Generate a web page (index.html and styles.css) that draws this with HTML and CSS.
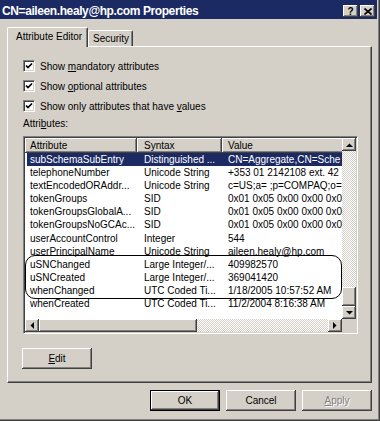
FILE: index.html
```html
<!DOCTYPE html>
<html lang="en">
<head>
    <meta charset="UTF-8">
    <title>CN=aileen.healy@hp.com Properties</title>
    <link rel="stylesheet" href="styles.css">
</head>
<body>
    <div class="window">
        <div class="titlebar">
            <span class="title">CN=aileen.healy@hp.com Properties</span>
            <div class="caption-btns">
                <span class="cap-btn">?</span>
                <span class="cap-btn">
                    <svg width="8" height="7" viewBox="0 0 8 7"><path d="M0.5 0.5L7.5 6.5M7.5 0.5L0.5 6.5" stroke="#000" stroke-width="1.6"/></svg>
                </span>
            </div>
        </div>
        <div class="content">
            <div class="tabs">
                <div class="tab active">Attribute Editor</div>
                <div class="tab">Security</div>
            </div>
            <div class="panel">
                <div class="check">
                    <span class="box"><svg width="8" height="8" viewBox="0 0 8 8"><polyline points="1,3.5 3,5.6 7,1.5" fill="none" stroke="#000" stroke-width="1.7"/></svg></span>
                    <span>Show <u>m</u>andatory attributes</span>
                </div>
                <div class="check">
                    <span class="box"><svg width="8" height="8" viewBox="0 0 8 8"><polyline points="1,3.5 3,5.6 7,1.5" fill="none" stroke="#000" stroke-width="1.7"/></svg></span>
                    <span>Show <u>o</u>ptional attributes</span>
                </div>
                <div class="check">
                    <span class="box"><svg width="8" height="8" viewBox="0 0 8 8"><polyline points="1,3.5 3,5.6 7,1.5" fill="none" stroke="#000" stroke-width="1.7"/></svg></span>
                    <span>Show only attributes that have <u>v</u>alues</span>
                </div>
                <div class="list-label">Attri<u>b</u>utes:</div>

                <div class="listview">
                    <div class="list-main">
                        <div class="list-head">
                            <span class="hcell">Attribute</span>
                            <span class="hcell syn">Syntax</span>
                            <span class="hcell val">Value</span>
                        </div>
                        <div class="row selected"><span>subSchemaSubEntry</span><span>Distinguished ...</span><span>CN=Aggregate,CN=Sche</span></div>
                        <div class="row"><span>telephoneNumber</span><span>Unicode String</span><span>+353 01 2142108 ext. 42</span></div>
                        <div class="row"><span>textEncodedORAddr...</span><span>Unicode String</span><span>c=US;a= ;p=COMPAQ;o=</span></div>
                        <div class="row"><span>tokenGroups</span><span>SID</span><span>0x01 0x05 0x00 0x00 0x0</span></div>
                        <div class="row"><span>tokenGroupsGlobalA...</span><span>SID</span><span>0x01 0x05 0x00 0x00 0x0</span></div>
                        <div class="row"><span>tokenGroupsNoGCAc...</span><span>SID</span><span>0x01 0x05 0x00 0x00 0x0</span></div>
                        <div class="row"><span>userAccountControl</span><span>Integer</span><span>544</span></div>
                        <div class="row"><span>userPrincipalName</span><span>Unicode String</span><span>aileen.healy@hp.com</span></div>
                        <div class="row"><span>uSNChanged</span><span>Large Integer/...</span><span>409982570</span></div>
                        <div class="row"><span>uSNCreated</span><span>Large Integer/...</span><span>369041420</span></div>
                        <div class="row"><span>whenChanged</span><span>UTC Coded Ti...</span><span>1/18/2005 10:57:52 AM</span></div>
                        <div class="row"><span>whenCreated</span><span>UTC Coded Ti...</span><span>11/2/2004 8:16:38 AM</span></div>
                        <div class="mark"></div>
                    </div>
                    <div class="vscroll">
                        <span class="arrow"><svg width="7" height="4" viewBox="0 0 7 4"><path d="M0 4H7L3.5 0.5Z"/></svg></span>
                        <div class="track track-v"><span class="thumb thumb-v"></span></div>
                        <span class="arrow"><svg width="7" height="4" viewBox="0 0 7 4"><path d="M0 0H7L3.5 3.5Z"/></svg></span>
                    </div>
                    <div class="hscroll">
                        <span class="arrow"><svg width="4" height="7" viewBox="0 0 4 7"><path d="M4 0V7L0.5 3.5Z"/></svg></span>
                        <div class="track"><span class="thumb thumb-h"></span></div>
                        <span class="arrow"><svg width="4" height="7" viewBox="0 0 4 7"><path d="M0 0V7L3.5 3.5Z"/></svg></span>
                    </div>
                    <div class="corner"></div>
                </div>

                <button class="btn edit-btn"><span><u>E</u>dit</span></button>
            </div>
            <div class="actions">
                <button class="btn default">OK</button>
                <button class="btn">Cancel</button>
                <button class="btn disabled"><span><u>A</u>pply</span></button>
            </div>
        </div>
    </div>
</body>
</html>
```

FILE: styles.css
```css
html,
body {
    margin: 0;
    background: #d4d0c8;
}

body {
    font-family: "Liberation Sans", Arial, sans-serif;
    font-size: 10px;
    color: #000;
}

.window {
    width: 380px;
    height: 421px;
    box-sizing: border-box;
    padding: 0 3px 2px 0;
    background: #d4d0c8;
    box-shadow: inset -1px -1px #404040, inset -2px -2px #808080;
}

/* title bar */
.titlebar {
    height: 19px;
    padding: 0 2px;
    background: #1c2a63;
    color: #fff;
    display: flex;
    justify-content: space-between;
    align-items: flex-start;
}

.title {
    font-weight: bold;
    font-size: 12px;
    letter-spacing: -0.4px;
    line-height: 15px;
    padding-top: 4px;
    white-space: nowrap;
}

.caption-btns {
    display: flex;
    gap: 2px;
    margin-top: 5px;
}

.cap-btn {
    width: 15px;
    height: 12px;
    background: #d4d0c8;
    color: #000;
    font-weight: bold;
    font-size: 10px;
    display: flex;
    align-items: center;
    justify-content: center;
    box-shadow: inset -1px -1px #404040, inset 1px 1px #fff, inset -2px -2px #808080;
}

.content {
    padding: 8px 0 0 7px;
}

/* tabs */
.tabs {
    display: flex;
    align-items: flex-end;
    height: 19px;
}

.tab {
    box-sizing: border-box;
    height: 16px;
    width: 45px;
    padding-left: 4px;
    line-height: 15px;
    background: #d4d0c8;
    border-top: 1px solid #fff;
    border-left: 1px solid #fff;
    border-right: 1px solid #404040;
    border-radius: 2px 2px 0 0;
    box-shadow: inset -1px 0 #808080;
    white-space: nowrap;
}

.tab.active {
    position: relative;
    z-index: 1;
    width: 81px;
    height: 20px;
    margin-bottom: -1px;
    padding-left: 8px;
    line-height: 18px;
}

/* page panel */
.panel {
    width: 365px;
    height: 337px;
    box-sizing: border-box;
    padding: 9px 0 0 15px;
    border-top: 1px solid #fff;
    border-left: 1px solid #fff;
    border-right: 1px solid #404040;
    border-bottom: 1px solid #404040;
    box-shadow: inset -1px -1px #808080;
}

.check {
    display: flex;
    align-items: center;
    gap: 5px;
    height: 20px;
}

.box {
    width: 12px;
    height: 12px;
    box-sizing: border-box;
    background: #fff;
    border-top: 1px solid #808080;
    border-left: 1px solid #808080;
    border-bottom: 1px solid #fff;
    border-right: 1px solid #fff;
    box-shadow: inset 1px 1px #404040, inset -1px -1px #d4d0c8;
    display: flex;
    align-items: center;
    justify-content: center;
}

.list-label {
    margin-top: 2px;
    line-height: 12px;
}

/* list view */
.listview {
    margin-top: 6px;
    width: 335px;
    height: 198px;
    box-sizing: border-box;
    padding: 1px;
    border: 1px solid;
    border-color: #808080 #fff #fff #808080;
    box-shadow: inset 1px 1px #404040, inset -1px -1px #d4d0c8;
    display: grid;
    grid-template-columns: 1fr 14px;
    grid-template-rows: 1fr 13px;
}

.list-main {
    position: relative;
    overflow: hidden;
    background: #fff;
}

.list-head {
    display: grid;
    grid-template-columns: 112px 85px 200px;
    height: 15px;
}

.hcell {
    background: #d4d0c8;
    line-height: 15px;
    padding-left: 5px;
    white-space: nowrap;
    box-shadow: inset -1px -1px #404040, inset 1px 1px #fff, inset -2px -2px #808080;
}

.hcell.syn {
    padding-left: 7px;
}

.hcell.val {
    padding-left: 6px;
}

.row {
    display: grid;
    grid-template-columns: 110px 85px 200px;
    margin-left: 2px;
    height: 13.1px;
    line-height: 13.1px;
    white-space: nowrap;
}

.row span {
    overflow: hidden;
}

.row span:nth-child(1) {
    padding-left: 3px;
}

.row span:nth-child(2) {
    padding-left: 7px;
}

.row span:nth-child(3) {
    padding-left: 6px;
}

.row.selected {
    background: #1c2a63;
    color: #fff;
}

/* hand-drawn highlight around the usn/when rows */
.mark {
    position: absolute;
    left: 0;
    right: 0;
    top: 117px;
    height: 44px;
    box-sizing: border-box;
    border: 1px solid #000;
    border-radius: 10px;
}

/* scroll bars */
.vscroll {
    display: flex;
    flex-direction: column;
}

.hscroll {
    display: flex;
}

.arrow,
.thumb {
    background: #d4d0c8;
    box-shadow: inset -1px -1px #404040, inset 1px 1px #fff, inset -2px -2px #808080;
}

.arrow {
    width: 14px;
    height: 13px;
    flex: none;
    display: flex;
    align-items: center;
    justify-content: center;
}

.track {
    flex: 1;
    display: flex;
    background-color: #fff;
    background-image: conic-gradient(#d4d0c8 25%, transparent 0 50%, #d4d0c8 0 75%, transparent 0);
    background-size: 2px 2px;
}

.track-v {
    flex-direction: column;
    justify-content: flex-end;
}

.thumb-v {
    height: 19px;
}

.thumb-h {
    width: 158px;
}

.corner {
    background: #d4d0c8;
}

/* buttons */
.btn {
    font: inherit;
    color: #000;
    width: 70px;
    height: 21px;
    padding: 0;
    border: 0;
    background: #d4d0c8;
    box-shadow: inset -1px -1px #404040, inset 1px 1px #fff, inset -2px -2px #808080;
}

.edit-btn {
    margin: 14px 0 0 -1px;
}

.actions {
    width: 365px;
    margin-top: 7px;
    display: flex;
    justify-content: flex-end;
    gap: 6px;
}

.btn.default {
    border: 1px solid #000;
}

.btn.disabled {
    color: #808080;
    text-shadow: 1px 1px #fff;
}
```
